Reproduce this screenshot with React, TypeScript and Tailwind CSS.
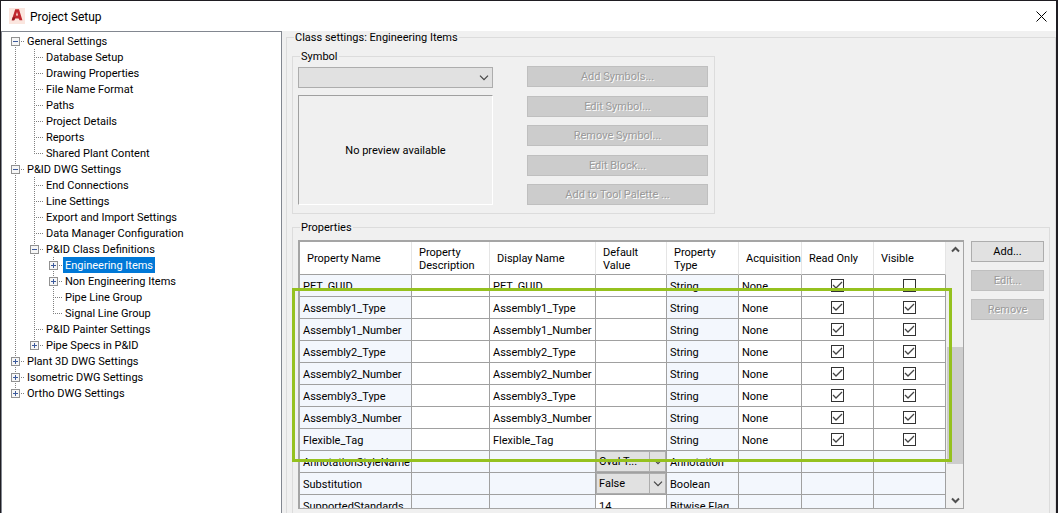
import { useState } from 'react';

type TreeNode = {
  label: string;
  children?: TreeNode[];
  collapsed?: boolean;
};

const TREE: TreeNode[] = [
  {
    label: 'General Settings',
    children: [
      { label: 'Database Setup' },
      { label: 'Drawing Properties' },
      { label: 'File Name Format' },
      { label: 'Paths' },
      { label: 'Project Details' },
      { label: 'Reports' },
      { label: 'Shared Plant Content' },
    ],
  },
  {
    label: 'P&ID DWG Settings',
    children: [
      { label: 'End Connections' },
      { label: 'Line Settings' },
      { label: 'Export and Import Settings' },
      { label: 'Data Manager Configuration' },
      {
        label: 'P&ID Class Definitions',
        children: [
          { label: 'Engineering Items', collapsed: true },
          { label: 'Non Engineering Items', collapsed: true },
          { label: 'Pipe Line Group' },
          { label: 'Signal Line Group' },
        ],
      },
      { label: 'P&ID Painter Settings' },
      { label: 'Pipe Specs in P&ID', collapsed: true },
    ],
  },
  { label: 'Plant 3D DWG Settings', collapsed: true },
  { label: 'Isometric DWG Settings', collapsed: true },
  { label: 'Ortho DWG Settings', collapsed: true },
];

type Row = {
  name: string;
  display?: string;
  value?: string;
  options?: boolean;
  type: string;
  readOnly?: boolean;
  visible?: boolean;
  locked?: boolean;
};

const ROWS: Row[] = [
  { name: 'PET_GUID', display: 'PET_GUID', type: 'String', readOnly: true, visible: false },
  { name: 'Assembly1_Type', display: 'Assembly1_Type', type: 'String', readOnly: true, visible: true },
  { name: 'Assembly1_Number', display: 'Assembly1_Number', type: 'String', readOnly: true, visible: true },
  { name: 'Assembly2_Type', display: 'Assembly2_Type', type: 'String', readOnly: true, visible: true },
  { name: 'Assembly2_Number', display: 'Assembly2_Number', type: 'String', readOnly: true, visible: true },
  { name: 'Assembly3_Type', display: 'Assembly3_Type', type: 'String', readOnly: true, visible: true },
  { name: 'Assembly3_Number', display: 'Assembly3_Number', type: 'String', readOnly: true, visible: true },
  { name: 'Flexible_Tag', display: 'Flexible_Tag', type: 'String', readOnly: true, visible: true },
  { name: 'AnnotationStyleName', value: 'Oval T...', options: true, type: 'Annotation', locked: true },
  { name: 'Substitution', value: 'False', options: true, type: 'Boolean', locked: true },
  { name: 'SupportedStandards', value: '14', type: 'Bitwise Flag', locked: true },
];

const COLUMNS = [
  { title: 'Property Name', width: 'w-[112px]' },
  { title: 'Property Description', width: 'w-[78px]' },
  { title: 'Display Name', width: 'w-[106px]' },
  { title: 'Default Value', width: 'w-[71px]' },
  { title: 'Property Type', width: 'w-[72px]' },
  { title: 'Acquisition', width: 'w-[63px]' },
  { title: 'Read Only', width: 'w-[72px]' },
  { title: 'Visible', width: 'w-[72px]' },
];

function Chevron({ className = '' }: { className?: string }) {
  return (
    <svg className={className} width="10" height="6" viewBox="0 0 10 6" fill="none" stroke="#444" strokeWidth="1.2" aria-hidden="true">
      <path d="M1 0.7 L5 4.7 L9 0.7" />
    </svg>
  );
}

function Guide({ on }: { on: boolean }) {
  return (
    <svg className="shrink-0" width="19" height="16" shapeRendering="crispEdges" aria-hidden="true">
      {on && <path d="M9.5 0V16" stroke="#808080" strokeDasharray="1 1" />}
    </svg>
  );
}

function Joint({ first, last, expander }: { first: boolean; last: boolean; expander?: 'plus' | 'minus' }) {
  return (
    <svg className="shrink-0" width="19" height="16" shapeRendering="crispEdges" aria-hidden="true">
      {!first && <path d="M9.5 0V8" stroke="#808080" strokeDasharray="1 1" />}
      {!last && <path d="M9.5 8V16" stroke="#808080" strokeDasharray="1 1" />}
      <path d="M9 8.5H18" stroke="#808080" strokeDasharray="1 1" />
      {expander && (
        <>
          <rect x="5.5" y="4.5" width="8" height="8" fill="#f6f6f6" stroke="#919191" />
          <path d="M7 8.5H12" stroke="#3c5a9c" />
          {expander === 'plus' && <path d="M9.5 6V11" stroke="#3c5a9c" />}
        </>
      )}
    </svg>
  );
}

function TreeLevel({ nodes, guides }: { nodes: TreeNode[]; guides: boolean[] }) {
  const root = guides.length === 0;
  return (
    <ul>
      {nodes.map((node, i) => {
        const last = i === nodes.length - 1;
        const selected = node.label === 'Engineering Items';
        const expander = node.children ? 'minus' : node.collapsed ? 'plus' : undefined;
        return (
          <li key={node.label}>
            <div className="flex h-4 items-center">
              {guides.map((on, g) => (
                <Guide key={g} on={on} />
              ))}
              {expander ? (
                <button type="button" aria-label={`Toggle ${node.label}`}>
                  <Joint first={root && i === 0} last={last} expander={expander} />
                </button>
              ) : (
                <Joint first={false} last={last} />
              )}
              <button
                type="button"
                className={selected ? 'h-4 bg-[#0078d7] px-0.5 whitespace-nowrap text-white' : 'h-4 px-0.5 whitespace-nowrap'}
              >
                {node.label}
              </button>
            </div>
            {node.children && <TreeLevel nodes={node.children} guides={[...guides, !last]} />}
          </li>
        );
      })}
    </ul>
  );
}

function DialogButton({ label, disabled = false }: { label: string; disabled?: boolean }) {
  return (
    <button
      type="button"
      disabled={disabled}
      className="h-[21px] w-full border border-[#adadad] bg-[#e1e1e1] disabled:border-[#bfbfbf] disabled:bg-[#cccccc] disabled:text-[#9a9a9a] disabled:[text-shadow:1px_1px_0_#fff]"
    >
      {label}
    </button>
  );
}

function CheckCell({ label, initial }: { label: string; initial: boolean }) {
  const [checked, setChecked] = useState(initial);
  return (
    <div className="grid place-items-center">
      <input
        type="checkbox"
        aria-label={label}
        checked={checked}
        onChange={(e) => setChecked(e.target.checked)}
        className="col-start-1 row-start-1 size-[13px] appearance-none border border-[#333] bg-white"
      />
      {checked && (
        <svg className="pointer-events-none col-start-1 row-start-1" width="13" height="13" fill="none" stroke="#444" strokeWidth="1.3" aria-hidden="true">
          <path d="M2 6 L5 9 L11 3" />
        </svg>
      )}
    </div>
  );
}

function PropertyRow({ row }: { row: Row }) {
  const cell = 'h-[22px] border-r border-b border-[#a0a0a0] pt-px pb-0 pl-[3px] whitespace-nowrap';
  const tinted = `${cell} bg-[#f3f7fd]`;
  const plain = row.locked ? tinted : cell;
  return (
    <tr>
      <td className={tinted}>{row.name}</td>
      <td className={plain} />
      <td className={plain}>{row.display}</td>
      {row.options ? (
        <td className="h-[22px] border-r border-b border-[#a0a0a0] p-0">
          <div className="flex h-[21px] border border-[#adadad] bg-[#e1e1e1]">
            <select aria-label={`${row.name} default value`} className="min-w-0 flex-1 appearance-none px-0.5">
              <option>{row.value}</option>
            </select>
            <span className="grid w-4 place-items-center border-l border-[#adadad]">
              <Chevron />
            </span>
          </div>
        </td>
      ) : (
        <td className={cell}>{row.value}</td>
      )}
      <td className={tinted}>{row.type}</td>
      <td className={plain}>{row.locked ? '' : 'None'}</td>
      <td className={row.locked ? tinted : 'h-[22px] border-r border-b border-[#a0a0a0] p-0'}>
        {!row.locked && <CheckCell label={`${row.name} read only`} initial={!!row.readOnly} />}
      </td>
      <td className={row.locked ? tinted : 'h-[22px] border-r border-b border-[#a0a0a0] p-0'}>
        {!row.locked && <CheckCell label={`${row.name} visible`} initial={!!row.visible} />}
      </td>
    </tr>
  );
}

function PropertyGrid() {
  return (
    <div className="relative min-w-0 flex-1">
      <div className="flex h-[269px] overflow-hidden border-t-2 border-r border-b border-l-2 border-[#a5a5a5] bg-white">
        <table className="w-full min-w-0 table-fixed border-separate border-spacing-0 self-start">
          <thead>
            <tr>
              {COLUMNS.map((col) => (
                <th
                  key={col.title}
                  className={`${col.width} h-[33px] border-r border-b border-r-[#e5e5e5] border-b-[#a0a0a0] pt-px pr-0 pb-0 pl-[7px] text-left font-normal`}
                >
                  {col.title}
                </th>
              ))}
            </tr>
          </thead>
          <tbody>
            {ROWS.map((row) => (
              <PropertyRow key={row.name} row={row} />
            ))}
          </tbody>
        </table>
        <div className="flex w-[17px] shrink-0 flex-col items-center bg-[#f0f0f0] py-1 pl-px">
          <svg width="9" height="7" fill="none" stroke="#505050" strokeWidth="2" aria-hidden="true">
            <path d="M1 5.5 L4.5 2 L8 5.5" />
          </svg>
          <div className="mt-[94px] h-[117px] w-full bg-[#cdcdcd]" />
          <svg className="mt-auto" width="9" height="7" fill="none" stroke="#505050" strokeWidth="2" aria-hidden="true">
            <path d="M1 1.5 L4.5 5 L8 1.5" />
          </svg>
        </div>
      </div>
      {/* highlight frame around the assembly properties */}
      <div className="pointer-events-none absolute top-12 right-3 -left-1.5 h-[174px] border-3 border-[#95c11f]" />
    </div>
  );
}

export default function App() {
  return (
    <div className="flex h-screen flex-col overflow-hidden border-t border-r-2 border-l border-[#1f1d22] bg-[#f0f0f0] font-[Roboto,'Liberation_Sans',sans-serif] text-[11px] leading-[13px] text-black">
      <header className="flex h-[30px] shrink-0 items-center bg-white pl-2">
        <svg width="16" height="16" viewBox="0 0 16 16" aria-hidden="true">
          <rect width="16" height="16" fill="#fbe6df" />
          <path d="M2.7 12.3 L6.2 1.3 H10 L13.4 12.3 H10.6 L9.6 10.4 H6.2 L5.2 12.3 Z M6.9 7.6 H9.1 L8 4 Z" fill="#c0272d" fillRule="evenodd" />
          <path d="M2.7 12.3 L3.7 9.2 H6.6 L5.2 12.3 Z" fill="#96191f" />
        </svg>
        <h1 className="ml-[5px] pt-px text-xs">Project Setup</h1>
        <button type="button" aria-label="Close" className="ml-auto grid h-full w-[29px] place-items-center">
          <svg width="11" height="11" stroke="#000" strokeWidth="1" aria-hidden="true">
            <path d="M0.5 0.5 L10.5 10.5 M10.5 0.5 L0.5 10.5" />
          </svg>
        </button>
      </header>

      <div className="flex min-h-0 flex-1 gap-1">
        <nav aria-label="Settings" className="w-[281px] shrink-0 border border-b-0 border-[#828790] bg-white pt-px pl-1">
          <TreeLevel nodes={TREE} guides={[]} />
        </nav>

        <fieldset className="min-w-0 flex-1 border border-b-0 border-[#dcdcdc] px-[5px]">
          <legend className="ml-0.5 px-px">Class settings: Engineering Items</legend>

          <fieldset className="mt-1.5 flex w-[423px] justify-between border border-[#dcdcdc] pt-[3px] pr-1.5 pb-2 pl-[5px]">
            <legend className="ml-0.5 px-px">Symbol</legend>
            <div className="flex w-[195px] flex-col gap-[7px] pt-px">
              <div className="grid items-center">
                <select
                  aria-label="Symbol"
                  disabled
                  className="col-start-1 row-start-1 h-[21px] w-full appearance-none border border-[#adadad] bg-[#e1e1e1]"
                />
                <Chevron className="pointer-events-none col-start-1 row-start-1 mr-1 justify-self-end" />
              </div>
              <div className="grid h-[110px] place-items-center border border-t-[#a0a0a0] border-r-white border-b-white border-l-[#a0a0a0]">
                No preview available
              </div>
            </div>
            <div className="flex w-[181px] flex-col justify-between">
              <DialogButton label="Add Symbols..." disabled />
              <DialogButton label="Edit Symbol..." disabled />
              <DialogButton label="Remove Symbol..." disabled />
              <DialogButton label="Edit Block..." disabled />
              <DialogButton label="Add to Tool Palette ..." disabled />
            </div>
          </fieldset>

          <fieldset className="mt-[7px] flex h-[320px] gap-[7px] border border-[#dcdcdc] px-[5px] pt-1.5">
            <legend className="ml-0.5 px-px">Properties</legend>
            <PropertyGrid />
            <div className="flex w-[73px] shrink-0 flex-col gap-2 pt-px">
              <DialogButton label="Add..." />
              <DialogButton label="Edit..." disabled />
              <DialogButton label="Remove" disabled />
            </div>
          </fieldset>
        </fieldset>
      </div>
    </div>
  );
}
